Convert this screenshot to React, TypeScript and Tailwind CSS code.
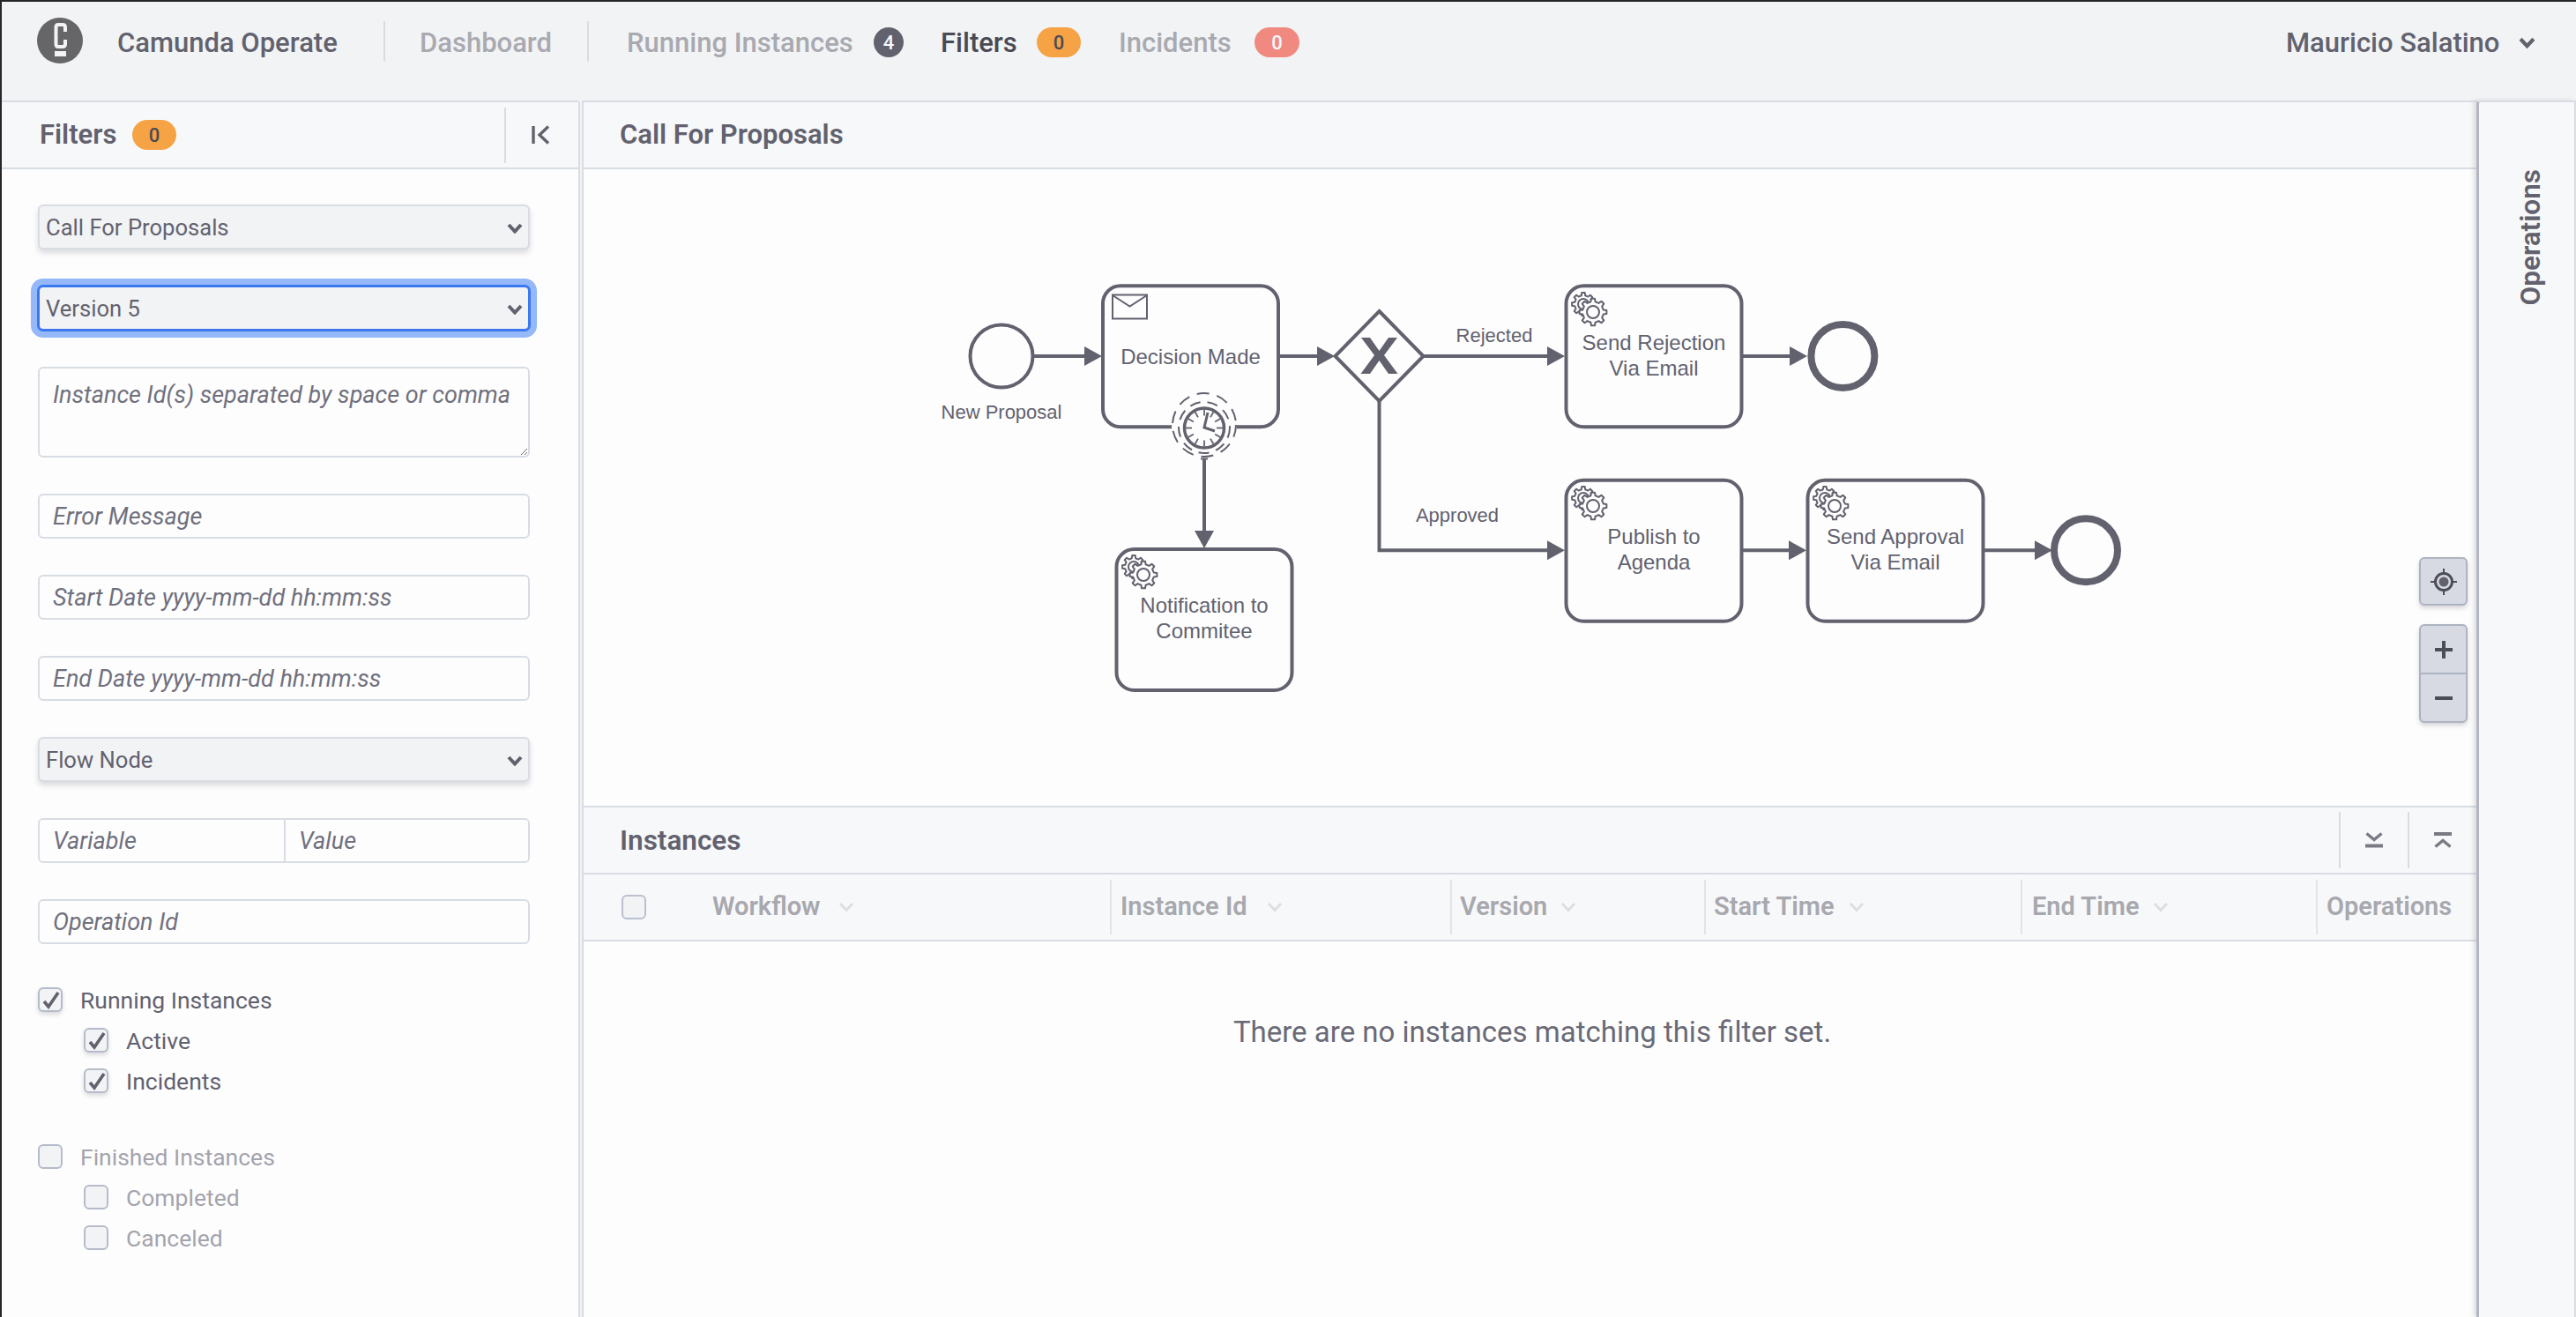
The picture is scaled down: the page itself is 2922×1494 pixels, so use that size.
import React from "react";

const INK = "#62626e";

function gearPath(cx: number, cy: number, rOut: number, rIn: number, teeth: number) {
  const pts: string[] = [];
  const step = (Math.PI * 2) / teeth;
  for (let i = 0; i < teeth; i++) {
    const a = i * step;
    const w = step * 0.24;
    const list: [number, number][] = [
      [rIn, a - w * 1.15],
      [rOut, a - w * 0.7],
      [rOut, a + w * 0.7],
      [rIn, a + w * 1.15],
    ];
    list.forEach(([r, t]) => pts.push(`${(cx + r * Math.cos(t)).toFixed(2)} ${(cy + r * Math.sin(t)).toFixed(2)}`));
  }
  return "M" + pts.join("L") + "Z";
}

function Gears({ x, y }: { x: number; y: number }) {
  return (
    <g transform={`translate(${x} ${y})`} fill="#fdfdfe" stroke={INK} strokeWidth={2} strokeLinejoin="round">
      <path d={gearPath(14, 14, 13, 10, 8)} />
      <circle cx={14} cy={14} r={6} />
      <path d={gearPath(25, 23, 15.5, 12, 8)} />
      <circle cx={25} cy={23} r={7} />
    </g>
  );
}

function Arrow({ x, y }: { x: number; y: number }) {
  return <polygon points={`${x - 20},${y - 11} ${x},${y} ${x - 20},${y + 11}`} fill={INK} />;
}

function Task({ x, y, lines, textY }: { x: number; y: number; lines: string[]; textY: number[] }) {
  return (
    <g>
      <rect x={x} y={y} width={199} height={160} rx={20} fill="#fdfdfe" stroke={INK} strokeWidth={4} />
      {lines.map((l, i) => (
        <text key={l} x={x + 99.5} y={textY[i]} textAnchor="middle" dominantBaseline="central" fontSize={24} fill={INK}>
          {l}
        </text>
      ))}
    </g>
  );
}

function Timer() {
  const ticks = Array.from({ length: 12 }, (_, i) => (i * Math.PI) / 6);
  return (
    <g fill="none" stroke={INK}>
      <circle cx={1366} cy={484} r={37} fill="#fdfdfe" stroke="none" />
      <circle cx={1366} cy={482} r={36} strokeWidth={2} strokeDasharray="14 9" />
      <circle cx={1366} cy={485} r={29} strokeWidth={2} strokeDasharray="12 8" />
      <circle cx={1366} cy={485.5} r={22.5} strokeWidth={3.5} />
      {ticks.map((a, i) => (
        <line
          key={i}
          x1={1366 + 14 * Math.cos(a)}
          y1={485.5 + 14 * Math.sin(a)}
          x2={1366 + 21 * Math.cos(a)}
          y2={485.5 + 21 * Math.sin(a)}
          strokeWidth={1.8}
        />
      ))}
      <polyline points="1370,468 1366,485 1378,489" strokeWidth={3} />
      <line x1={1362} y1={520.5} x2={1370} y2={520.5} strokeWidth={2} />
    </g>
  );
}

function Diagram() {
  return (
    <svg
      className="absolute inset-0 block"
      width={2147}
      height={722}
      viewBox="662 192 2147 722"
      fontFamily="'Liberation Sans', Arial, sans-serif"
    >
      <g stroke={INK} strokeWidth={4} fill="none">
        <line x1={1172} y1={404} x2={1232} y2={404} />
        <line x1={1451} y1={404} x2={1496} y2={404} />
        <line x1={1614} y1={404} x2={1757} y2={404} />
        <line x1={1977} y1={404} x2={2032} y2={404} />
        <polyline points="1564.5,455 1564.5,624.3 1757,624.3" />
        <line x1={1977} y1={624.3} x2={2030} y2={624.3} />
        <line x1={2251} y1={624.3} x2={2310} y2={624.3} />
        <line x1={1366} y1={520} x2={1366} y2={604} />
      </g>
      <Arrow x={1250} y={404} />
      <Arrow x={1514} y={404} />
      <Arrow x={1775} y={404} />
      <Arrow x={2050} y={404} />
      <Arrow x={1775} y={624.3} />
      <Arrow x={2049} y={624.3} />
      <Arrow x={2328} y={624.3} />
      <polygon points="1355,602 1377,602 1366,622" fill={INK} />

      <circle cx={1136} cy={404} r={35.5} fill="#fdfdfe" stroke={INK} strokeWidth={4} />
      <text x={1136} y={467} textAnchor="middle" dominantBaseline="central" fontSize={22} fill={INK}>
        New Proposal
      </text>

      <Task x={1251} y={324.3} lines={["Decision Made"]} textY={[404]} />
      <rect x={1262} y={334.5} width={39} height={27} fill="#fdfdfe" stroke={INK} strokeWidth={2} />
      <polyline points="1262,335 1281.5,347.5 1301,335" fill="none" stroke={INK} strokeWidth={2} />
      <Timer />

      <polygon points="1564.5,353 1614.5,404 1564.5,455 1514.5,404" fill="#fdfdfe" stroke={INK} strokeWidth={4} strokeLinejoin="miter" />
      <polygon
        points="1544,383 1554,383 1564.5,398 1575,383 1585,383 1570,403 1585.5,424 1575,424 1564.5,409 1554,424 1543.5,424 1559,403"
        fill={INK}
      />

      <text x={1695} y={380} textAnchor="middle" dominantBaseline="central" fontSize={22} fill={INK}>
        Rejected
      </text>
      <text x={1653} y={584} textAnchor="middle" dominantBaseline="central" fontSize={22} fill={INK}>
        Approved
      </text>

      <Task x={1266.5} y={623} lines={["Notification to", "Commitee"]} textY={[686.5, 715]} />
      <Gears x={1272} y={629} />
      <Task x={1776.5} y={324.3} lines={["Send Rejection", "Via Email"]} textY={[388.5, 417]} />
      <Gears x={1782} y={331} />
      <Task x={1776.5} y={544.7} lines={["Publish to", "Agenda"]} textY={[608, 637]} />
      <Gears x={1782} y={551} />
      <Task x={2050.5} y={544.7} lines={["Send Approval", "Via Email"]} textY={[608, 637]} />
      <Gears x={2056} y={551} />

      <circle cx={2090.4} cy={404} r={36} fill="#fdfdfe" stroke={INK} strokeWidth={8} />
      <circle cx={2366} cy={624.3} r={36} fill="#fdfdfe" stroke={INK} strokeWidth={8} />
    </svg>
  );
}

function Badge({ n, cls, w }: { n: number; cls: string; w: string }) {
  return (
    <span className={`flex h-[34px] items-center justify-center rounded-full text-[22px] font-medium ${w} ${cls}`}>{n}</span>
  );
}

function Chevron({ className = "", color = INK, width = 4 }: { className?: string; color?: string; width?: number }) {
  return (
    <svg className={className} viewBox="0 0 18 12" fill="none">
      <polyline points="2,2 9,9.5 16,2" stroke={color} strokeWidth={width} />
    </svg>
  );
}

function SelectBox({ value, focus = false }: { value: string; focus?: boolean }) {
  return (
    <div className="relative h-[51px] w-[558px]">
      <select
        defaultValue={value}
        className={`h-full w-full appearance-none rounded-[6px] border-2 bg-[#f2f3f5] pl-[7px] pt-[2px] text-[25.6px] text-[#62626e] outline-none ${
          focus
            ? "border-[#3b78f0] shadow-[0_0_0_1px_#3b78f0,0_0_0_8px_#94b8f8]"
            : "border-[#d8dce3] shadow-[0_4px_6px_rgba(98,98,110,0.22)]"
        }`}
      >
        <option>{value}</option>
      </select>
      <Chevron className="pointer-events-none absolute right-[8px] top-[21px] h-[12px] w-[18px]" />
    </div>
  );
}

const inputCls =
  "h-full bg-[#fdfdfe] pl-[15px] text-[27px] text-[#62626e] outline-none placeholder:italic placeholder:text-[#70707c] placeholder:opacity-100";

function TextInput({ placeholder }: { placeholder: string }) {
  return (
    <div className="h-[51px] w-[558px]">
      <input placeholder={placeholder} className={`${inputCls} w-full rounded-[6px] border-2 border-[#d8dce3]`} />
    </div>
  );
}

function Check({ checked = false, size = "" }: { checked?: boolean; size?: string }) {
  return (
    <span
      className={`relative block h-[28px] w-[28px] shrink-0 rounded-[6px] border-2 border-[#b4bbc9] bg-[#f2f3f5] ${size} ${
        checked ? "shadow-[0_3px_5px_rgba(98,98,110,0.22)]" : ""
      }`}
    >
      {checked && (
        <svg className="absolute left-[3px] top-[3px] h-[20px] w-[20px]" viewBox="0 0 20 20" fill="none">
          <polyline points="2,11 7,17 18,1" stroke={INK} strokeWidth={3.6} />
        </svg>
      )}
    </span>
  );
}

function CheckRow({ label, checked, indent, dim }: { label: string; checked?: boolean; indent?: boolean; dim?: boolean }) {
  return (
    <label className={`flex h-[28px] items-center gap-[20px] ${indent ? "ml-[52px]" : ""}`}>
      <Check checked={checked} />
      <span className={`pt-[2px] text-[26.5px] ${dim ? "text-[#a4a4ac]" : "text-[#62626e]"}`}>{label}</span>
    </label>
  );
}

function Divider({ h, c = "#d8dce3" }: { h: string; c?: string }) {
  return <span className={`block w-[2px] shrink-0 ${h}`} style={{ background: c }} />;
}

function HeadCell({ w, pl, label, lw, sort = true }: { w: string; pl: string; label: string; lw: string; sort?: boolean }) {
  return (
    <div className={`flex items-center ${w}`}>
      <Divider h="h-[62px]" c="#e2e4e9" />
      <div className={`flex items-center ${pl}`}>
        <span className={`whitespace-nowrap text-[29px] font-semibold text-[#a8a8ae] ${lw}`}>{label}</span>
        {sort && <Chevron className="ml-[15px] h-[12px] w-[20px]" color="#dcdde1" width={2.6} />}
      </div>
    </div>
  );
}

export default function App() {
  return (
    <div className="flex h-[1494px] w-[2922px] flex-col overflow-hidden border-l-2 border-t-2 border-l-[#26262a] border-t-[#26262a] bg-[#f2f3f5] font-['Roboto',sans-serif]">
      <header className="h-[112px] shrink-0">
        <div className="flex h-[92px] items-center whitespace-nowrap text-[31px] font-medium">
          <svg className="-mt-[4px] ml-[40px] h-[52px] w-[52px] shrink-0" viewBox="0 0 52 52">
            <circle cx={26} cy={26} r={26} fill="#666668" />
            <path d="M32 16 V11 Q32 8 29 8 H24 Q21.5 8 21.5 11 V30 Q21.5 33 24 33 H29 Q32 33 32 30 V25" fill="none" stroke="#f2f3f5" strokeWidth={4} />
            <rect x={20} y={38} width={13} height={6} fill="#f2f3f5" />
          </svg>
          <span className="ml-[39px] w-[247px] pt-[2px] text-[#62626e]">Camunda Operate</span>
          <span className="-mt-[2px] ml-[55px]"><Divider h="h-[46px]" /></span>
          <span className="ml-[39px] w-[147px] pt-[2px] text-[#a9a9b0]">Dashboard</span>
          <span className="-mt-[2px] ml-[43px]"><Divider h="h-[46px]" /></span>
          <span className="ml-[43px] w-[255px] pt-[2px] text-[#a9a9b0]">Running Instances</span>
          <span className="ml-[25px]"><Badge n={4} w="w-[34px]" cls="bg-[#62626e] text-[#f7f8fa]" /></span>
          <span className="ml-[42px] w-[86px] pt-[2px] text-[#4a4a55]">Filters</span>
          <span className="ml-[23px]"><Badge n={0} w="w-[50px]" cls="bg-[#f5a344] text-[#4a4a55]" /></span>
          <span className="ml-[43px] w-[129px] pt-[2px] text-[#a9a9b0]">Incidents</span>
          <span className="ml-[25px]"><Badge n={0} w="w-[51px]" cls="bg-[#f08a80] text-[#f7f8fa]" /></span>
          <span className="flex-1" />
          <span className="w-[240px] pt-[2px] text-[#62626e]">Mauricio Salatino</span>
          <Chevron className="ml-[24px] mr-[46px] h-[13px] w-[19px]" />
        </div>
      </header>

      <main className="flex min-h-0 flex-1">
        <aside className="flex w-[656px] shrink-0 flex-col rounded-tr-[4px] border-r-2 border-t-2 border-[#d8dce3] bg-[#fdfdfe]">
          <div className="flex h-[76px] shrink-0 items-center border-b-2 border-[#d8dce3] bg-[#f7f8fa]">
            <span className="ml-[43px] w-[90px] whitespace-nowrap pt-[1px] text-[31px] font-semibold text-[#62626e]">Filters</span>
            <span className="ml-[15px]"><Badge n={0} w="w-[50px]" cls="bg-[#f5a344] text-[#4a4a55]" /></span>
            <span className="flex-1" />
            <Divider h="h-[63px]" />
            <span className="flex w-[82px] justify-center pr-[3px]">
              <svg className="h-[22px] w-[21px]" viewBox="0 0 21 22" fill="none" stroke={INK} strokeWidth={3.4}>
                <line x1={2} y1={1} x2={2} y2={21} />
                <polyline points="19,1.5 9,11 19,20.5" />
              </svg>
            </span>
          </div>
          <div className="flex flex-1 flex-col pl-[41px] pt-[40px]">
            <div className="flex flex-col gap-[41px]">
              <SelectBox value="Call For Proposals" />
              <SelectBox value="Version 5" focus />
              <div className="h-[103px] w-[558px]">
                <textarea
                  placeholder="Instance Id(s) separated by space or comma"
                  className={`${inputCls} w-full rounded-[6px] border-2 border-[#d8dce3] pt-[13px] leading-[34px]`}
                />
              </div>
              <TextInput placeholder="Error Message" />
              <TextInput placeholder="Start Date yyyy-mm-dd hh:mm:ss" />
              <TextInput placeholder="End Date yyyy-mm-dd hh:mm:ss" />
              <SelectBox value="Flow Node" />
              <div className="flex h-[51px] w-[558px] overflow-hidden rounded-[6px] border-2 border-[#d8dce3]">
                <input placeholder="Variable" className={`${inputCls} w-[279px] shrink-0 border-r-2 border-[#d8dce3]`} />
                <input placeholder="Value" className={`${inputCls} w-[275px] min-w-0 shrink-0`} />
              </div>
              <TextInput placeholder="Operation Id" />
            </div>
            <div className="mt-[49px] flex flex-col gap-[58px]">
              <div className="flex flex-col gap-[18px]">
                <CheckRow label="Running Instances" checked />
                <CheckRow label="Active" checked indent />
                <CheckRow label="Incidents" checked indent />
              </div>
              <div className="flex flex-col gap-[18px]">
                <CheckRow label="Finished Instances" dim />
                <CheckRow label="Completed" indent dim />
                <CheckRow label="Canceled" indent dim />
              </div>
            </div>
          </div>
        </aside>

        <section className="ml-[2px] flex min-w-0 flex-1 flex-col border-l-2 border-t-2 border-[#d8dce3] bg-[#fdfdfe]">
          <div className="flex h-[76px] shrink-0 items-center border-b-2 border-[#d8dce3] bg-[#f7f8fa]">
            <span className="ml-[41px] whitespace-nowrap pt-[1px] text-[31px] font-semibold text-[#62626e]">Call For Proposals</span>
          </div>
          <div className="relative h-[722px] shrink-0">
            <Diagram />
            <button className="absolute right-[10px] top-[440px] flex h-[55px] w-[55px] items-center justify-center rounded-[6px] border-2 border-[#adb3c0] bg-[#d7dae2] shadow-[0_3px_5px_rgba(98,98,110,0.25)]">
              <svg className="h-[30px] w-[30px]" viewBox="0 0 30 30" fill="none" stroke="#4d4d58">
                <circle cx={15} cy={15} r={9.5} strokeWidth={3} />
                <circle cx={15} cy={15} r={5.5} fill="#62626e" stroke="none" />
                <path d="M15 0v5M15 25v5M0 15h5M25 15h5" strokeWidth={2} />
              </svg>
            </button>
            <div className="absolute right-[10px] top-[516px] flex h-[112px] w-[55px] flex-col overflow-hidden rounded-[6px] border-2 border-[#adb3c0] bg-[#d7dae2] shadow-[0_3px_5px_rgba(98,98,110,0.25)]">
              <button className="flex h-[55px] items-center justify-center border-b-2 border-[#adb3c0]">
                <svg className="h-[20px] w-[20px]" viewBox="0 0 20 20" fill="#4d4d58">
                  <path d="M8 0h4v8h8v4h-8v8H8v-8H0V8h8z" />
                </svg>
              </button>
              <button className="flex flex-1 items-center justify-center">
                <span className="block h-[4px] w-[20px] bg-[#4d4d58]" />
              </button>
            </div>
          </div>

          <div className="flex h-[78px] shrink-0 items-center border-y-2 border-[#d8dce3] bg-[#f7f8fa]">
            <span className="ml-[41px] whitespace-nowrap pt-[1px] text-[31.5px] font-semibold text-[#62626e]">Instances</span>
            <span className="flex-1" />
            <Divider h="h-[64px]" />
            <span className="flex w-[76px] justify-center">
              <svg className="h-[18px] w-[20px]" viewBox="0 0 20 18" fill="none" stroke="#7a7a84">
                <polyline points="1.5,1.5 10,8.5 18.5,1.5" strokeWidth={3.4} />
                <line x1={0} y1={15.5} x2={20} y2={15.5} strokeWidth={4} />
              </svg>
            </span>
            <Divider h="h-[64px]" />
            <span className="flex w-[76px] justify-center">
              <svg className="h-[18px] w-[20px]" viewBox="0 0 20 18" fill="none" stroke="#7a7a84">
                <line x1={0} y1={2} x2={20} y2={2} strokeWidth={4} />
                <polyline points="1.5,16.5 10,9.5 18.5,16.5" strokeWidth={3.4} />
              </svg>
            </span>
          </div>
          <div className="flex h-[76px] shrink-0 items-center border-b-2 border-[#d8dce3] bg-[#f7f8fa]">
            <div className="flex w-[597px] items-center pl-[43px]">
              <Check size="opacity-90" />
              <span className="ml-[75px] flex items-center">
                <span className="w-[127px] whitespace-nowrap text-[29px] font-semibold text-[#a8a8ae]">Workflow</span>
                <Chevron className="ml-[15px] h-[12px] w-[20px]" color="#dcdde1" width={2.6} />
              </span>
            </div>
            <HeadCell w="w-[386px]" pl="pl-[10px]" label="Instance Id" lw="w-[150px]" />
            <HeadCell w="w-[288px]" pl="pl-[9px]" label="Version" lw="w-[98px]" />
            <HeadCell w="w-[359px]" pl="pl-[9px]" label="Start Time" lw="w-[137px]" />
            <HeadCell w="w-[335px]" pl="pl-[11px]" label="End Time" lw="w-[121px]" />
            <HeadCell w="flex-1" pl="pl-[10px]" label="Operations" lw="w-[141px]" sort={false} />
          </div>
          <div className="flex-1 pl-[5px] pt-[78px] text-center text-[33px] text-[#6a6a75]">
            There are no instances matching this filter set.
          </div>
        </section>

        <aside className="flex w-[113px] shrink-0 justify-center rounded-tl-[4px] border-l-[3px] border-r-2 border-t-2 border-l-[#b4b7c2] border-r-[#d8dce3] border-t-[#d8dce3] bg-[#f7f8fa] pl-[10px] pt-[76px] shadow-[-3px_0_5px_rgba(98,98,110,0.2)]">
          <span className="h-fit rotate-180 whitespace-nowrap text-[31.5px] font-semibold text-[#62626e] [writing-mode:vertical-rl]">
            Operations
          </span>
        </aside>
      </main>
    </div>
  );
}
